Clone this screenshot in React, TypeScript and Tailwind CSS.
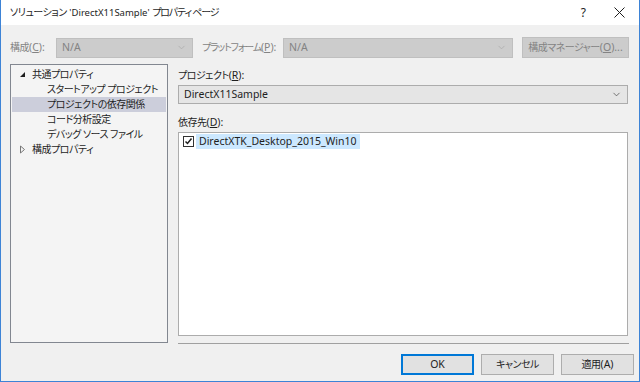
import { ChevronDown } from "lucide-react";
import type { ReactNode } from "react";

const font = { fontFamily: '"Noto Sans", "Noto Sans CJK JP", sans-serif' };

// Japanese text runs a little narrower, like Yu Gothic UI
function J({ children, tight }: { children: ReactNode; tight?: boolean }) {
  return <span className={`text-[10px] ${tight ? "tracking-[-1.2px]" : "tracking-[-0.5px]"}`}>{children}</span>;
}

function Combo({ text, disabled, className }: { text: string; disabled?: boolean; className: string }) {
  return (
    <div
      className={`flex items-center justify-between border px-[5px] ${
        disabled ? "bg-[#cccccc] border-[#bfbfbf] text-[#838383]" : "bg-[#e5e5e5] border-[#acacac] text-[#1e1e1e]"
      } ${className}`}
    >
      <span>{text}</span>
      <ChevronDown className={`w-[11px] h-[11px] ${disabled ? "text-[#a8a8a8]" : "text-[#404040]"}`} strokeWidth={1.5} />
    </div>
  );
}

function TreeRow({ label, indent, arrow, selected }: { label: string; indent: number; arrow?: "open" | "closed"; selected?: boolean }) {
  return (
    <div className={`flex items-center h-[15px] leading-none ${selected ? "bg-[#cccedb]" : ""}`}>
      <div className="w-[20px] flex justify-center">
        {arrow === "open" && (
          <svg width="7" height="7" viewBox="0 0 7 7">
            <path d="M6 1 L6 6 L1 6 Z" fill="#1e1e1e" />
          </svg>
        )}
        {arrow === "closed" && (
          <svg width="7" height="9" viewBox="0 0 7 9">
            <path d="M1.5 1 L5.5 4.5 L1.5 8 Z" fill="none" stroke="#777" />
          </svg>
        )}
      </div>
      <span style={{ marginLeft: indent }} className="text-[#1e1e1e]">
        <J>{label}</J>
      </span>
    </div>
  );
}

function Btn({ children, primary }: { children: ReactNode; primary?: boolean }) {
  return (
    <div
      className={`w-[73px] h-[21px] flex items-center justify-center text-[#1e1e1e] bg-[#e1e1e1] ${
        primary ? "border-2 border-[#0078d7]" : "border border-[#adadad]"
      }`}
    >
      {children}
    </div>
  );
}

export default function App() {
  return (
    <div
      style={font}
      className="w-[640px] h-[382px] flex flex-col border-x border-b border-[#3d83d6] bg-[#f0f0f0] overflow-hidden text-[10.5px] [font-feature-settings:'palt'] whitespace-nowrap"
    >
      <div className="h-[25px] bg-white flex items-center justify-between pl-[9px] pr-[14px] text-[#1e1e1e]">
        <span>
          <J>ソリューション</J> <span className="text-[9.5px]">'DirectX11Sample'</span> <J tight>プロパティ ページ</J>
        </span>
        <div className="flex items-center gap-[28px]">
          <span className="text-[12px]">?</span>
          <svg width="11" height="11" viewBox="0 0 11 11">
            <path d="M0.5 0.5 L10.5 10.5 M10.5 0.5 L0.5 10.5" stroke="#1e1e1e" strokeWidth="1" />
          </svg>
        </div>
      </div>

      <div className="flex flex-col pl-[9px] pr-[10px]">
        <div className="mt-[12px] h-[21px] flex items-center text-[#838383]">
          <span className="w-[46px]">
            <J>構成</J>(<span className="underline">C</span>):
          </span>
          <Combo text="N/A" disabled className="w-[137px] h-[20px]" />
          <span className="ml-[9px] w-[81px]">
            <J tight>プラットフォーム</J>(<span className="underline">P</span>):
          </span>
          <Combo text="N/A" disabled className="w-[230px] h-[20px]" />
          <div className="ml-[9px] w-[107px] h-[21px] flex items-center justify-center bg-[#cccccc] border border-[#bfbfbf]">
            <J>構成マネージャー</J>(<span className="underline">O</span>)...
          </div>
        </div>

        <div className="mt-[6px] flex">
          <div className="w-[158px] h-[279px] bg-[#f4f4f4] border border-[#828790] pt-[2px] px-[1px]">
            <TreeRow label="共通プロパティ" indent={0} arrow="open" />
            <TreeRow label="スタートアップ プロジェクト" indent={15} />
            <TreeRow label="プロジェクトの依存関係" indent={15} selected />
            <TreeRow label="コード分析設定" indent={15} />
            <TreeRow label="デバッグ ソース ファイル" indent={15} />
            <TreeRow label="構成プロパティ" indent={0} arrow="closed" />
          </div>

          <div className="ml-[10px] w-[451px] flex flex-col text-[#1e1e1e]">
            <div className="h-[21px] flex items-end pb-[1px]">
              <span>
                <J>プロジェクト</J>(<span className="underline">R</span>):
              </span>
            </div>
            <Combo text="DirectX11Sample" className="h-[19px] mr-[1px]" />
            <div className="h-[28px] flex items-end pb-[1px]">
              <span>
                <J>依存先</J>(<span className="underline">D</span>):
              </span>
            </div>
            <div className="h-[204px] bg-white border border-[#acacac] mr-[1px] pt-[1px] pl-[4px]">
              <div className="flex items-center h-[15px]">
                <div className="w-[11px] h-[11px] border border-[#333] bg-white flex items-center justify-center">
                  <svg width="9" height="9" viewBox="0 0 9 9">
                    <path d="M1.5 4.5 L3.5 6.5 L7.5 1.5" fill="none" stroke="#1e1e1e" strokeWidth="1.5" />
                  </svg>
                </div>
                <span className="ml-[2px] bg-[#cce8ff] h-[15px] flex items-center px-[3px]">DirectXTK_Desktop_2015_Win10</span>
              </div>
            </div>
            <div className="mt-[7px] h-[1px] bg-[#a0a0a0]" />
          </div>
        </div>

        <div className="mt-[10px] -mr-[5px] flex justify-end gap-[7px]">
          <Btn primary>OK</Btn>
          <Btn>
            <J>キャンセル</J>
          </Btn>
          <Btn>
            <J>適用</J>(A)
          </Btn>
        </div>
      </div>
    </div>
  );
}
